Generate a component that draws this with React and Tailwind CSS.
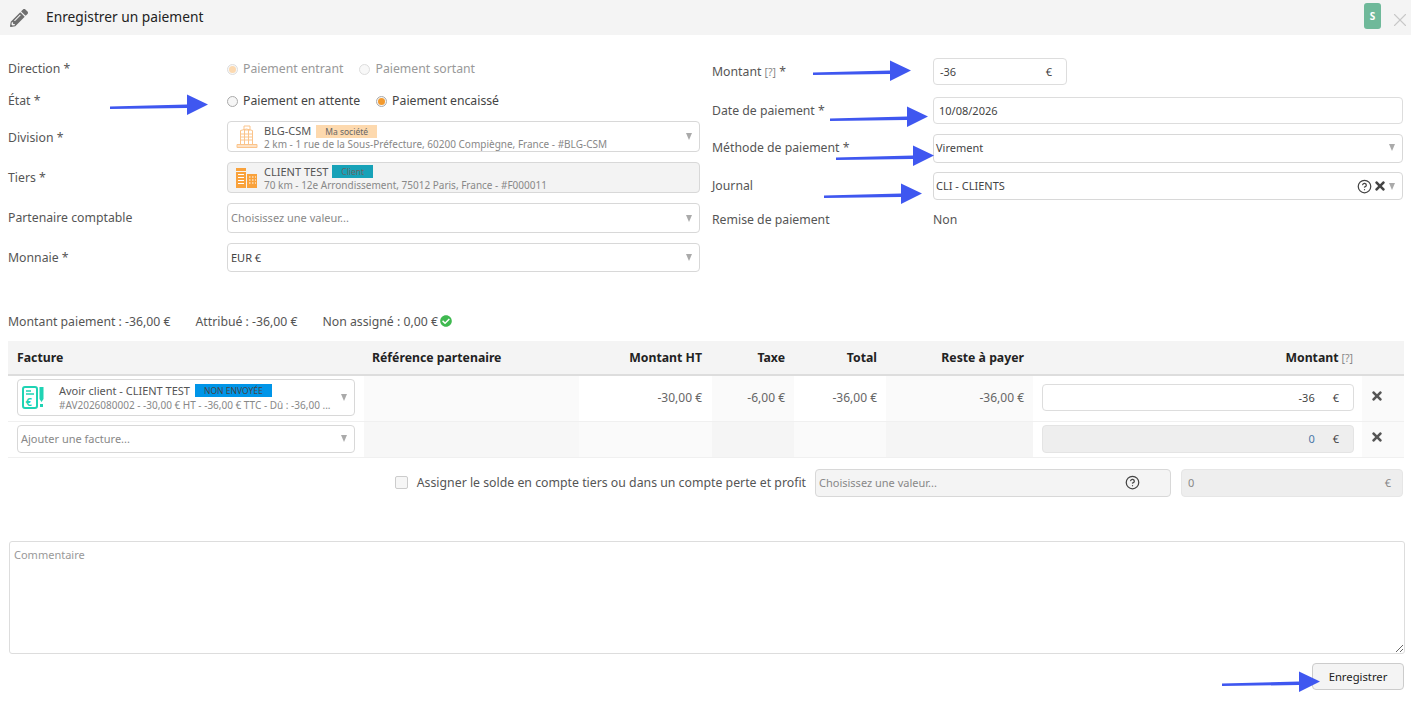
import React from 'react';
import { FaPencilAlt, FaTimes, FaCheckCircle } from 'react-icons/fa';
import { CircleHelp, X } from 'lucide-react';

// Blue annotation arrow painted over the form
const Arrow = ({ className, w }) => (
  <svg className={`absolute ${className}`} width={w} height="22" viewBox={`0 0 ${w} 22`}>
    <path d={`M0 12.5 L${w - 21} 10.5 L${w - 21} 0.5 L${w} 10.5 L${w - 21} 21 L${w - 21} 14 L0 15 Z`} fill="#3f57f0" />
  </svg>
);

const Caret = () => <span className="w-0 h-0 border-x-[3.5px] border-x-transparent border-t-[7px] border-t-[#aaa]" />;

const Radio = ({ label, checked, disabled }) => (
  <label className={`flex items-center gap-[5px] ${disabled ? 'text-[#999]' : 'text-[#444]'}`}>
    <span className={`w-[11px] h-[11px] rounded-full border flex items-center justify-center ${disabled ? 'border-[#ddd] bg-[#f8f8f8]' : 'border-[#aaa] bg-[#f6f6f6]'}`}>
      {checked && <span className={`w-[7px] h-[7px] rounded-full ${disabled ? 'bg-[#fcd9b0]' : 'bg-[#f39a2e]'}`} />}
    </span>
    {label}
  </label>
);

const Box = ({ className = '', children, caret = true }) => (
  <div className={`flex items-center justify-between border border-[#d8d8d8] rounded-[4px] pr-[7px] ${className}`}>
    <div className="min-w-0 flex-1 flex items-center">{children}</div>
    {caret && <Caret />}
  </div>
);

const Tower = () => (
  <svg width="22" height="24" viewBox="0 0 22 24" fill="none" stroke="#fbc48b" strokeWidth="1">
    <path d="M8 1h6v4H8zM4.500 5.500l6-1.500 6 1.500v14h-12zM4.500 9h12M4.500 12h12M4.500 15h12M8.500 5v14.500M12.500 5v14.500M1 19.500h20v3H1zM1 21h20" />
  </svg>
);

const Offices = () => (
  <svg width="21" height="20" viewBox="0 0 21 20" fill="#f9a23c">
    <path d="M0 0h10v3h-10zM0 4h10v16H0zM11 6h10v14H11z" />
    <path d="M2 6.500h6M2 9.500h6M2 12.500h6M2 15.500h6M13 9h1.500M16 9h1.500M19 9h1M13 12h1.500M16 12h1.500M19 12h1M13 15h1.500M16 15h1.500M19 15h1" stroke="#fff" strokeWidth="1" />
  </svg>
);

const Invoice = () => (
  <svg width="22" height="23" viewBox="0 0 22 23" fill="none" stroke="#1fd3b4" strokeWidth="2">
    <rect x="1" y="1" width="14" height="21" rx="2" />
    <path d="M4 5h5M4 8h8" strokeWidth="1.500" />
    <text x="3.500" y="19.500" fontSize="11" fontWeight="700" fill="#1fd3b4" stroke="none" fontFamily="Noto Sans">€</text>
    <path d="M17.500 1h4v12l-2 3-2-3zM18 18h3v3h-3z" fill="#1fd3b4" stroke="none" />
  </svg>
);

const LeftRow = ({ label, className = '', labelClass = '', children }) => (
  <div className={`flex items-center ${className}`}>
    <div className={`w-[219px] shrink-0 text-[#555] ${labelClass}`}>{label}</div>
    <div className="flex-1 min-w-0">{children}</div>
  </div>
);

const RightRow = ({ label, className = '', labelClass = '', children }) => (
  <div className={`flex items-center ${className}`}>
    <div className={`w-[221px] shrink-0 text-[#555] ${labelClass}`}>{label}</div>
    <div className="flex-1 min-w-0">{children}</div>
  </div>
);

const HelpMark = () => <span className="text-[10.5px] font-normal text-[#888]">[?]</span>;

const Th = ({ className = '', children }) => <div className={`h-full flex items-center font-bold text-[#222] ${className}`}>{children}</div>;

const Td = ({ className = '', children }) => <div className={`h-full flex items-center justify-end pb-[2px] text-[#666] text-[12px] pr-[9px] ${className}`}>{children}</div>;

const tableCols = 'grid grid-cols-[356px_215px_133px_82px_92px_147px_329px_42px]';

export default function App() {
  return (
    <div className="relative w-[1411px] h-[710px] overflow-hidden bg-white text-[12.25px] leading-[18px] font-['Noto_Sans',sans-serif]">
      <header className="h-[35px] bg-[#f4f4f4] flex items-center pl-[10px]">
        <FaPencilAlt className="text-[#6e6e6e] text-[18px] mr-[18px]" />
        <h1 className="text-[13.75px] text-[#222] flex-1 pb-[1px]">Enregistrer un paiement</h1>
        <span className="w-[17px] h-[26px] mt-[-3px] rounded-[3px] bg-[#6fb99a] text-white text-[10px] font-bold flex items-center justify-center mr-[8px]">S</span>
        <X size={22} strokeWidth={1.2} className="text-[#c8c8c8] mt-[4px]" />
      </header>

      <section className="flex pl-[8px] pr-[8px] pt-[18px] h-[270px]">
        <div className="w-[692px] shrink-0">
          <LeftRow label="Direction *" className="h-[32px]">
            <div className="flex gap-[16px]">
              <Radio label="Paiement entrant" checked disabled />
              <Radio label="Paiement sortant" disabled />
            </div>
          </LeftRow>
          <LeftRow label="État *" className="h-[32px]">
            <div className="flex gap-[16px]">
              <Radio label="Paiement en attente" />
              <Radio label="Paiement encaissé" checked />
            </div>
          </LeftRow>
          <LeftRow label="Division *" labelClass="pt-[2px]" className="h-[31px] mt-[4px]">
            <Box className="h-[31px] pl-[8px]">
              <Tower />
              <div className="ml-[6px] min-w-0">
                <div className="flex items-center h-[15px] text-[11px] text-[#555]">
                  BLG-CSM
                  <span className="ml-[5px] h-[13px] px-[9px] bg-[#fdd9ae] text-[8.5px] leading-[13px] text-[#666]">Ma société</span>
                </div>
                <div className="text-[10px] leading-[12px] -mt-px text-[#888]">2 km - 1 rue de la Sous-Préfecture, 60200 Compiègne, France - #BLG-CSM</div>
              </div>
            </Box>
          </LeftRow>
          <LeftRow label="Tiers *" className="h-[31px] mt-[10px]">
            <Box className="h-[31px] pl-[8px] bg-[#f3f3f3] border-[#ccc]" caret={false}>
              <Offices />
              <div className="ml-[7px] min-w-0">
                <div className="flex items-center h-[15px] text-[11px] text-[#555]">
                  CLIENT TEST
                  <span className="ml-[4px] h-[13px] px-[9px] bg-[#17a2b8] text-[8.5px] leading-[13px] text-[#666]">Client</span>
                </div>
                <div className="text-[10px] leading-[12px] text-[#888]">70 km - 12e Arrondissement, 75012 Paris, France - #F000011</div>
              </div>
            </Box>
          </LeftRow>
          <LeftRow label="Partenaire comptable" className="h-[30px] mt-[10px]">
            <Box className="h-[30px] pl-[3px] text-[11px] text-[#888]">Choisissez une valeur...</Box>
          </LeftRow>
          <LeftRow label="Monnaie *" className="h-[29px] mt-[10px]">
            <Box className="h-[29px] pl-[3px] text-[11px] text-[#444]">EUR €</Box>
          </LeftRow>
        </div>

        <div className="ml-[12px] flex-1 min-w-0">
          <RightRow label={<>Montant <HelpMark /> *</>} className="h-[27px] mt-[5px]">
            <div className="w-[134px] h-[27px] border border-[#ddd] rounded-[4px] flex items-center justify-between pl-[6px] pr-[14px] text-[11px] text-[#444]">
              <span>-36</span>
              <span>€</span>
            </div>
          </RightRow>
          <RightRow label="Date de paiement *" className="h-[27px] mt-[12px]">
            <div className="h-[27px] border border-[#ddd] rounded-[4px] flex items-center pl-[5px] text-[11px] text-[#444]">10/08/2026</div>
          </RightRow>
          <RightRow label="Méthode de paiement *" labelClass="pb-[2px]" className="h-[29px] mt-[10px]">
            <Box className="h-[29px] pl-[2px] pb-[2px] text-[11px] text-[#444]">Virement</Box>
          </RightRow>
          <RightRow label="Journal" className="h-[28px] mt-[9px]">
            <Box className="h-[28px] pl-[2px] text-[11px] text-[#444]" caret={false}>
              <span className="flex-1">CLI - CLIENTS</span>
              <CircleHelp size={15} strokeWidth={2} className="text-[#444] mr-[1px]" />
              <FaTimes className="text-[#444] text-[14px] mr-[2px]" />
              <Caret />
            </Box>
          </RightRow>
          <RightRow label="Remise de paiement" className="h-[18px] mt-[11px]">
            <span className="text-[#555]">Non</span>
          </RightRow>
        </div>
      </section>

      <div className="flex items-center h-[18px] mt-[8px] pl-[8px] text-[#555]">
        <span className="mr-[25px]">Montant paiement : -36,00 €</span>
        <span className="mr-[25px]">Attribué : -36,00 €</span>
        <span>Non assigné : 0,00 €</span>
        <FaCheckCircle className="text-[#3fb950] text-[12px] ml-[2px] mt-[-3px]" />
      </div>

      <div className="ml-[8px] mr-[7px] mt-[10px]">
        <div className={`${tableCols} h-[35px] bg-[#f4f4f4] border-b-2 border-[#ddd]`}>
          <Th className="pl-[9px]">Facture</Th>
          <Th className="pl-[8px]">Référence partenaire</Th>
          <Th className="justify-end pr-[10px]">Montant HT</Th>
          <Th className="justify-end pr-[9px]">Taxe</Th>
          <Th className="justify-end pr-[9px]">Total</Th>
          <Th className="justify-end pr-[9px]">Reste à payer</Th>
          <Th className="justify-end pr-[9px] gap-[3px]">Montant <HelpMark /></Th>
          <Th />
        </div>

        <div className={`${tableCols} h-[45px]`}>
          <div className="h-full pt-[3px] pl-[9px] pr-[9px]">
            <Box className="w-full h-[37px] pl-[4px]">
              <Invoice />
              <div className="ml-[15px] min-w-0">
                <div className="flex items-center h-[14px] text-[11px] text-[#555]">
                  Avoir client - CLIENT TEST
                  <span className="ml-[5px] h-[13px] px-[9px] bg-[#0095e8] text-[8.5px] leading-[13px] text-[#444]">NON ENVOYÉE</span>
                </div>
                <div className="text-[10px] leading-[14px] text-[#888]">#AV2026080002 - -30,00 € HT - -36,00 € TTC - Dû : -36,00 ...</div>
              </div>
            </Box>
          </div>
          <Td className="bg-[#fafafa]" />
          <Td className="pr-[10px]">-30,00 €</Td>
          <Td className="bg-[#fafafa]">-6,00 €</Td>
          <Td>-36,00 €</Td>
          <Td className="bg-[#fafafa]">-36,00 €</Td>
          <div className="h-full pt-[8px] pl-[9px] pr-[8px]">
            <div className="w-full h-[27px] border border-[#ddd] rounded-[4px] flex items-center justify-end pr-[14px] gap-[18px] text-[11px] text-[#444]">
              <span>-36</span>
              <span>€</span>
            </div>
          </div>
          <div className="h-full flex items-start justify-center pt-[13px] bg-[#fafafa]">
            <FaTimes className="text-[#555] text-[14px] mr-[12px]" />
          </div>
        </div>

        <div className={`${tableCols} h-[37px] border-y border-[#f0f0f0]`}>
          <div className="h-full flex items-center pb-[2px] pl-[9px] pr-[9px]">
            <Box className="w-full h-[28px] pl-[3px] text-[11px] text-[#888]">Ajouter une facture...</Box>
          </div>
          <Td className="bg-[#f7f7f7]" />
          <Td className="bg-[#fafafa]" />
          <Td className="bg-[#f5f5f5]" />
          <Td className="bg-[#fafafa]" />
          <Td className="bg-[#f5f5f5]" />
          <div className="h-full flex items-center pb-[2px] pl-[9px] pr-[8px]">
            <div className="w-full h-[28px] bg-[#eee] border border-[#e4e4e4] rounded-[4px] flex items-center justify-end pr-[14px] gap-[18px] text-[11px] text-[#444]">
              <span className="text-[#4a78a8]">0</span>
              <span>€</span>
            </div>
          </div>
          <div className="h-full flex items-start justify-center pt-[8px] bg-[#fafafa]">
            <FaTimes className="text-[#555] text-[14px] mr-[12px]" />
          </div>
        </div>

        <div className="flex items-center justify-end h-[29px] mt-[10px] pr-px">
          <span className="w-[13px] h-[13px] border border-[#ccc] bg-[#f6f6f6] rounded-[2px] mr-[9px]" />
          <span className="text-[12.3px] text-[#555] mr-[9px]">Assigner le solde en compte tiers ou dans un compte perte et profit</span>
          <div className="w-[356px] h-[28px] bg-[#f4f4f4] border border-[#d8d8d8] rounded-[4px] flex items-center justify-between pl-[3px] pr-[30px] text-[11px] text-[#888]">
            Choisissez une valeur...
            <CircleHelp size={15} strokeWidth={2} className="text-[#444]" />
          </div>
          <div className="w-[222px] h-[28px] ml-[10px] bg-[#eee] border border-[#e6e6e6] rounded-[4px] flex items-center justify-between pl-[6px] pr-[11px] text-[11px] text-[#888]">
            <span>0</span>
            <span>€</span>
          </div>
        </div>
      </div>

      <div className="ml-[9px] mr-[6px] mt-[44px]">
        <textarea
          className="block w-full h-[113px] border border-[#ddd] rounded-[3px] px-[4px] py-[4px] text-[11px] outline-none placeholder:text-[#999]"
          placeholder="Commentaire"
        />
      </div>

      <div className="flex justify-end mt-[9px] pr-[7px]">
        <button className="w-[92px] h-[27px] bg-[#f4f4f4] border border-[#ccc] rounded-[4px] text-[11.25px] text-[#222]">Enregistrer</button>
      </div>

      <Arrow className="left-[110px] top-[94px]" w="98" />
      <Arrow className="left-[813px] top-[60px]" w="98" />
      <Arrow className="left-[830px] top-[106px]" w="98" />
      <Arrow className="left-[836px] top-[145px]" w="98" />
      <Arrow className="left-[824px] top-[183px]" w="98" />
      <Arrow className="left-[1222px] top-[671px]" w="98" />
    </div>
  );
}
